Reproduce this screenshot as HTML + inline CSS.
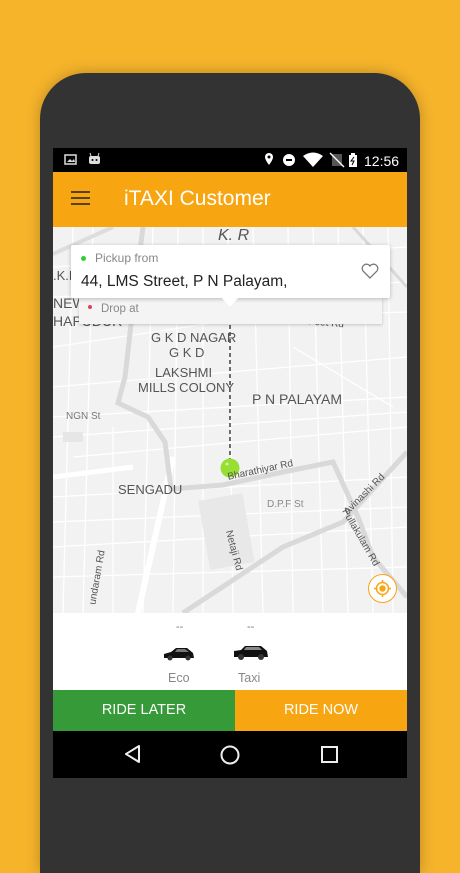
<!DOCTYPE html>
<html><head><meta charset="utf-8"><style>
*{margin:0;padding:0;box-sizing:border-box}
body{width:460px;height:818px;background:#F6B42B;position:relative;overflow:hidden;font-family:"Liberation Sans",sans-serif}
.phone{position:absolute;left:40px;top:73px;width:380px;height:800px;background:#333;border-radius:46px 46px 0 0;box-shadow:0 0 14px rgba(0,0,0,.25)}
.scr{position:absolute;left:53px;top:148px;width:354px;height:630px;background:#f2f2f2;overflow:hidden}
.sb{position:absolute;left:0;top:0;width:354px;height:24px;background:#000;color:#fff}
.ab{position:absolute;left:0;top:24px;width:354px;height:55px;background:#F7A511}
.ab .t{position:absolute;left:71px;top:15px;font-size:21px;color:#fff}
.hb{position:absolute;left:18px;width:19px;height:2px;background:#5a4210}
.map{position:absolute;left:0;top:79px;width:354px;height:386px}
.lbl{position:absolute;color:#555;font-size:13px;white-space:nowrap}
.card{position:absolute;left:18px;top:97px;width:319px;height:53px;background:#fff;box-shadow:0 1px 4px rgba(0,0,0,.25);border-radius:2px}
.card2{position:absolute;left:26px;top:150px;width:303px;height:26px;background:#f4f4f4;box-shadow:0 1px 3px rgba(0,0,0,.2)}
.bot{position:absolute;left:0;top:465px;width:354px;height:77px;background:#fff}
.btn{position:absolute;top:542px;height:41px;color:#fff;font-size:14.5px;text-align:center;line-height:41px}
.nav{position:absolute;left:0;top:583px;width:354px;height:47px;background:#000}
</style></head><body>
<div class="phone"></div>
<div class="scr">
 <div class="sb">
  <svg width="354" height="24">
   <rect x="12" y="7" width="11" height="9" fill="none" stroke="#ddd" stroke-width="1.5"/><path d="M14 14 L17 11 L19 13 L21 11 L22 14Z" fill="#ddd"/>
   <rect x="36" y="8" width="11" height="8" rx="2" fill="#ddd"/><path d="M38 8 L37 5 M45 8 L46 5" stroke="#ddd"/><circle cx="39.5" cy="12" r="1" fill="#000"/><circle cx="43.5" cy="12" r="1" fill="#000"/>
   <path d="M216 5 a4 4 0 0 1 4 4 c0 3 -4 8 -4 8 c0 0 -4 -5 -4 -8 a4 4 0 0 1 4 -4z" fill="#fff"/><circle cx="216" cy="9" r="1.5" fill="#000"/>
   <circle cx="236" cy="12" r="6" fill="#fff"/><rect x="233" y="11" width="6" height="2" fill="#000"/>
   <path d="M250 8 Q260 1 270 8 L260 19Z" fill="#fff"/>
   <path d="M279 6 L289 6 L289 18 L279 18Z" fill="#555"/><path d="M277 5 L291 19" stroke="#fff" stroke-width="1.3"/>
   <rect x="296" y="7" width="8" height="12" fill="#fff"/><rect x="298" y="5" width="4" height="2" fill="#fff"/><path d="M301 9 L298 13 L301 13 L299 17" stroke="#000" fill="none"/>
   <text x="311" y="18" fill="#fff" font-size="14" font-family="Liberation Sans">12:56</text>
  </svg>
 </div>
 <div class="ab">
  <div class="hb" style="top:19px"></div><div class="hb" style="top:25px"></div><div class="hb" style="top:31px"></div>
  <div class="t">iTAXI Customer</div>
 </div>
 <div class="map">
  <svg width="354" height="386">
   <g stroke="#fff" stroke-width="1.3" fill="none">
    <path d="M0 40 L354 20 M0 70 L354 55 M0 120 L200 90 M0 160 L354 130 M20 230 L354 200 M0 270 L354 250 M0 320 L354 300 M40 0 L30 386 M100 0 L90 386 M150 0 L150 386 M200 0 L210 386 M260 0 L270 386 M310 0 L320 386 M60 200 L60 386 M240 120 L340 180 M0 95 L354 85 M0 190 L354 170 M0 350 L354 340 M125 0 L120 386 M235 0 L240 386 M285 0 L295 386 M20 0 L10 386 M175 0 L180 386 M335 0 L340 386 M0 210 L354 185 M0 295 L354 280"/>
   </g>
   <path d="M85 386 L120 230" stroke="#fff" stroke-width="6"/>
   <path d="M0 250 L80 240" stroke="#fff" stroke-width="5"/>
   <path d="M0 27 L60 0" stroke="#ddd" stroke-width="4" fill="none"/>
   <path d="M90 0 L80 80 L72 150 L65 176 L95 190 L112 215 L118 262 L170 258 L230 245 L280 235 L305 290 L320 330 L354 370" stroke="#d9d9d9" stroke-width="5" fill="none"/>
   <path d="M130 386 L230 320 L290 295 L354 225" stroke="#d9d9d9" stroke-width="5" fill="none"/>
   <path d="M300 0 L354 60" stroke="#d9d9d9" stroke-width="3" fill="none"/>
   <rect x="150" y="270" width="45" height="70" fill="#e8e8e8" transform="rotate(-10 170 300)"/>
   <rect x="10" y="205" width="20" height="10" fill="#e6e6e6"/>
   <path d="M177 84 L177 232" stroke="#222" stroke-width="1.3" stroke-dasharray="4 3"/>
   <circle cx="177" cy="241" r="9.5" fill="#97e033"/><circle cx="174" cy="237" r="1.5" fill="#d0f5a0"/>
  </svg>
  <div class="lbl" style="left:165px;top:0;font-size:16px;font-style:italic">K. R</div>
  <div class="lbl" style="left:0;top:41px">.K.P</div>
  <div class="lbl" style="left:0;top:68px;font-size:14px">NEW</div>
  <div class="lbl" style="left:0;top:86px;font-size:14px">HAPUDUR</div>
  <div class="lbl" style="left:236px;top:90px;font-size:10px;transform:rotate(5deg)">100 Feet Rd</div>
  <div class="lbl" style="left:98px;top:103px;font-size:13px">G K D NAGAR</div>
  <div class="lbl" style="left:116px;top:118px">G K D</div>
  <div class="lbl" style="left:102px;top:138px">LAKSHMI</div>
  <div class="lbl" style="left:85px;top:153px">MILLS COLONY</div>
  <div class="lbl" style="left:199px;top:164px;font-size:14px">P N PALAYAM</div>
  <div class="lbl" style="left:13px;top:184px;font-size:10px;color:#777">NGN St</div>
  <div class="lbl" style="left:65px;top:255px;font-size:13px">SENGADU</div>
  <div class="lbl" style="left:174px;top:238px;font-size:10px;transform:rotate(-12deg)">Bharathiyar Rd</div>
  <div class="lbl" style="left:214px;top:272px;font-size:10px;color:#888">D.P.F St</div>
  <div class="lbl" style="left:285px;top:262px;font-size:10px;transform:rotate(-45deg)">Avinashi Rd</div>
  <div class="lbl" style="left:275px;top:305px;font-size:10px;transform:rotate(60deg)">Pullakulam Rd</div>
  <div class="lbl" style="left:160px;top:318px;font-size:10px;transform:rotate(75deg)">Netaji Rd</div>
  <div class="lbl" style="left:17px;top:345px;font-size:10px;transform:rotate(-80deg)">undaram Rd</div>
  <div style="position:absolute;left:315px;top:347px;width:29px;height:29px;border-radius:50%;background:#fff;border:1px solid #F7A511"></div>
  <svg style="position:absolute;left:315px;top:347px" width="29" height="29"><circle cx="14.5" cy="14.5" r="6" fill="none" stroke="#F7A511" stroke-width="1.5"/><circle cx="14.5" cy="14.5" r="3.2" fill="#F7A511"/><path d="M14.5 6v3M14.5 20v3M6 14.5h3M20 14.5h3" stroke="#F7A511" stroke-width="1.5"/></svg>
 </div>
 <div class="card2"><div style="position:absolute;left:9px;top:7px;width:4px;height:4px;border-radius:50%;background:#e0405a"></div><div style="position:absolute;left:22px;top:5px;font-size:11.5px;color:#888">Drop at</div></div>
 <div class="card">
  <div style="position:absolute;left:10px;top:11px;width:5px;height:5px;border-radius:50%;background:#3c3"></div>
  <div style="position:absolute;left:24px;top:6px;font-size:12px;color:#888">Pickup from</div>
  <div style="position:absolute;left:10px;top:28px;font-size:15.5px;color:#222">44, LMS Street, P N Palayam,</div>
  <svg style="position:absolute;left:290px;top:18px" width="18" height="16"><path d="M9 15 L2 8 A4 4 0 0 1 9 3 A4 4 0 0 1 16 8Z" fill="none" stroke="#777" stroke-width="1.3"/></svg>
  <div style="position:absolute;left:150px;top:52px;width:0;height:0;border-left:9px solid transparent;border-right:9px solid transparent;border-top:10px solid #fff"></div>
 </div>
 <div class="bot">
  <div style="position:absolute;left:123px;top:8px;color:#777;font-size:11px">--</div>
  <div style="position:absolute;left:194px;top:8px;color:#777;font-size:11px">--</div>
  <svg style="position:absolute;left:110px;top:34px" width="32" height="14"><path d="M1 11 L1 7 L8 5 L13 1 L24 1 L30 6 L31 11Z" fill="#111"/><circle cx="7" cy="11" r="2.5" fill="#333"/><circle cx="25" cy="11" r="2.5" fill="#333"/><path d="M14 2 L22 2 L26 5 L12 5Z" fill="#777"/></svg>
  <svg style="position:absolute;left:180px;top:32px" width="36" height="16"><path d="M1 12 L1 6 L8 5 L12 1 L28 1 L34 6 L35 12Z" fill="#111"/><circle cx="8" cy="12" r="3" fill="#333"/><circle cx="28" cy="12" r="3" fill="#333"/><path d="M13 2 L26 2 L29 5 L11 5Z" fill="#888"/></svg>
  <div style="position:absolute;left:115px;top:58px;color:#888;font-size:12.5px">Eco</div>
  <div style="position:absolute;left:185px;top:58px;color:#888;font-size:12.5px">Taxi</div>
 </div>
 <div class="btn" style="left:0;width:182px;background:#359A37">RIDE LATER</div>
 <div class="btn" style="left:182px;width:172px;background:#F7A511">RIDE NOW</div>
 <div class="nav">
  <svg width="354" height="47"><path d="M73 23 L86 15 L86 31Z" fill="none" stroke="#eee" stroke-width="2" stroke-linejoin="round"/><circle cx="177" cy="24" r="8.5" fill="none" stroke="#eee" stroke-width="2"/><rect x="269" y="16" width="15" height="15" fill="none" stroke="#eee" stroke-width="2"/></svg>
 </div>
</div>
</body></html>
